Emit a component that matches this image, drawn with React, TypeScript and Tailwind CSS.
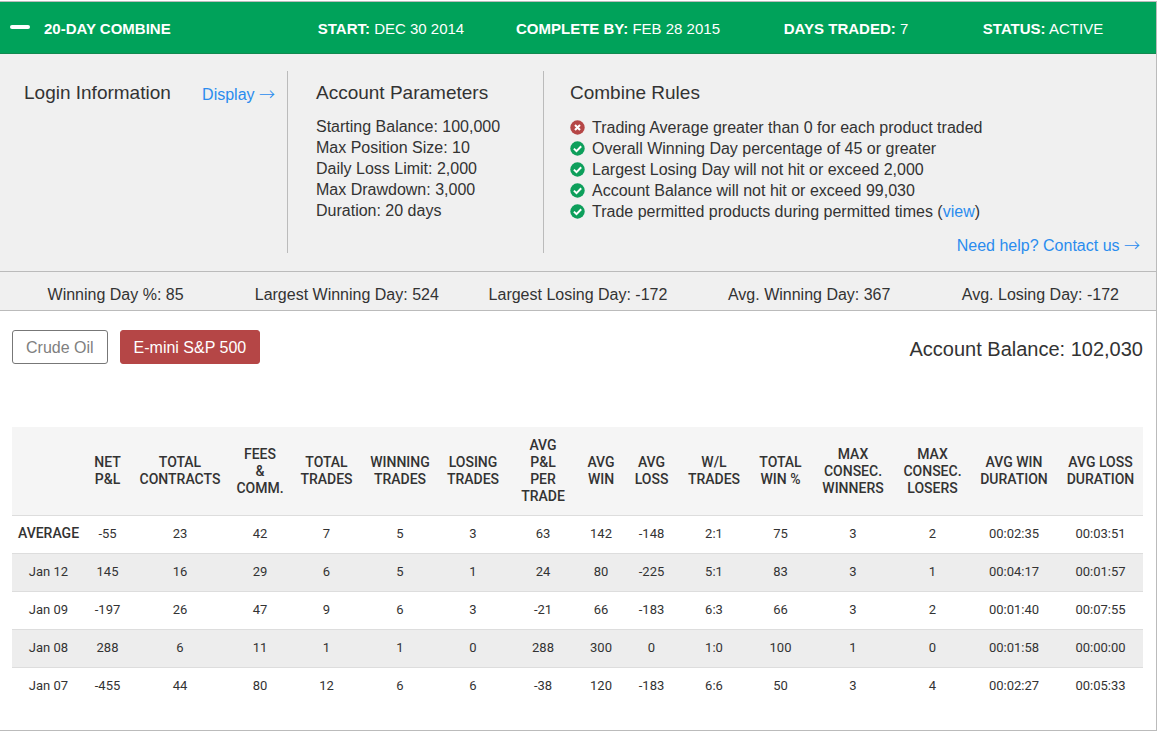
import type { ReactNode } from "react";

const summary = [
  { label: "START:", value: "DEC 30 2014" },
  { label: "COMPLETE BY:", value: "FEB 28 2015" },
  { label: "DAYS TRADED:", value: "7" },
  { label: "STATUS:", value: "ACTIVE" },
];

const parameters = [
  "Starting Balance: 100,000",
  "Max Position Size: 10",
  "Daily Loss Limit: 2,000",
  "Max Drawdown: 3,000",
  "Duration: 20 days",
];

const stats = [
  "Winning Day %: 85",
  "Largest Winning Day: 524",
  "Largest Losing Day: -172",
  "Avg. Winning Day: 367",
  "Avg. Losing Day: -172",
];

const columns = [
  { title: "", width: "w-[73px]" },
  { title: "NET\nP&L", width: "w-[45px]" },
  { title: "TOTAL\nCONTRACTS", width: "w-[100px]" },
  { title: "FEES\n&\nCOMM.", width: "w-[60px]" },
  { title: "TOTAL\nTRADES", width: "w-[73px]" },
  { title: "WINNING\nTRADES", width: "w-[74px]" },
  { title: "LOSING\nTRADES", width: "w-[72px]" },
  { title: "AVG\nP&L\nPER\nTRADE", width: "w-[68px]" },
  { title: "AVG\nWIN", width: "w-[48px]" },
  { title: "AVG\nLOSS", width: "w-[53px]" },
  { title: "W/L\nTRADES", width: "w-[72px]" },
  { title: "TOTAL\nWIN %", width: "w-[61px]" },
  { title: "MAX\nCONSEC.\nWINNERS", width: "w-[84px]" },
  { title: "MAX\nCONSEC.\nLOSERS", width: "w-[75px]" },
  { title: "AVG WIN\nDURATION", width: "w-[88px]" },
  { title: "AVG LOSS\nDURATION", width: "w-[85px]" },
];

const rows = [
  ["AVERAGE", "-55", "23", "42", "7", "5", "3", "63", "142", "-148", "2:1", "75", "3", "2", "00:02:35", "00:03:51"],
  ["Jan 12", "145", "16", "29", "6", "5", "1", "24", "80", "-225", "5:1", "83", "3", "1", "00:04:17", "00:01:57"],
  ["Jan 09", "-197", "26", "47", "9", "6", "3", "-21", "66", "-183", "6:3", "66", "3", "2", "00:01:40", "00:07:55"],
  ["Jan 08", "288", "6", "11", "1", "1", "0", "288", "300", "0", "1:0", "100", "1", "0", "00:01:58", "00:00:00"],
  ["Jan 07", "-455", "44", "80", "12", "6", "6", "-38", "120", "-183", "6:6", "50", "3", "4", "00:02:27", "00:05:33"],
];

const Arrow = () => (
  <span className="font-['Noto_Sans_CJK_JP',sans-serif] font-light leading-none">→</span>
);

const Rule = ({ passed, children }: { passed: boolean; children: ReactNode }) => (
  <li className="flex items-center gap-[7px]">
    <svg viewBox="0 0 15 15" className="size-[15px] shrink-0" fill="none">
      <circle cx="7.5" cy="7.5" r="7.2" fill={passed ? "#0d9f5b" : "#b54646"} />
      {passed ? (
        <path d="M3.9 7.6 6.5 10.1 11.2 5.3" stroke="#fff" strokeWidth="2" />
      ) : (
        <path d="M5 5 10 10M10 5 5 10" stroke="#fff" strokeWidth="2.1" />
      )}
    </svg>
    <span>{children}</span>
  </li>
);

const App = () => {
  return (
    <div className="pt-px font-['Liberation_Sans',Arial,sans-serif] text-base leading-[21px] text-[#333]">
      <div className="border-t border-r border-b border-[#bbb]">
        {/* Header */}
        <header className="grid grid-cols-[278fr_226fr_228fr_228fr_166fr_30fr] items-center h-[52px] pt-0.5 bg-[#00a25a] border-b border-[#128a50] text-[15px] text-white whitespace-nowrap">
          <div className="flex items-center gap-[14px] pl-[10px]">
            <button aria-label="Collapse" className="pt-1 pb-2">
              <span className="block w-5 h-1 rounded-full bg-white" />
            </button>
            <h1 className="font-bold">20-DAY COMBINE</h1>
          </div>
          {summary.map((item) => (
            <p key={item.label} className="text-center">
              <b>{item.label}</b> {item.value}
            </p>
          ))}
        </header>

        {/* Account details */}
        <section className="grid grid-cols-[287fr_256fr_613fr] pt-[17px] pb-[18px] bg-[#f0f0f0]">
          <div className="flex items-start justify-between pl-6 pr-3">
            <h2 className="pt-[11px] text-[19px]">Login Information</h2>
            <a href="#" className="pt-[13px] text-[#2a8cee]">
              Display <Arrow />
            </a>
          </div>
          <div className="border-l border-[#bbb] pl-7 pt-[11px]">
            <h2 className="text-[19px]">Account Parameters</h2>
            <ul className="pt-[13px]">
              {parameters.map((p) => (
                <li key={p}>{p}</li>
              ))}
            </ul>
          </div>
          <div className="flex flex-col border-l border-[#bbb] pl-[26px] pr-4 pt-[11px]">
            <h2 className="text-[19px]">Combine Rules</h2>
            <ul className="pt-[14px]">
              <Rule passed={false}>Trading Average greater than 0 for each product traded</Rule>
              <Rule passed>Overall Winning Day percentage of 45 or greater</Rule>
              <Rule passed>Largest Losing Day will not hit or exceed 2,000</Rule>
              <Rule passed>Account Balance will not hit or exceed 99,030</Rule>
              <Rule passed>
                Trade permitted products during permitted times (
                <a href="#" className="text-[#2a8cee]">view</a>)
              </Rule>
            </ul>
            <a href="#" className="self-end mt-[14px] leading-[14px] text-[#2a8cee]">
              Need help? Contact us <Arrow />
            </a>
          </div>
        </section>

        {/* Stats */}
        <section className="grid grid-cols-5 items-center h-10 pt-[6px] bg-[#f0f0f0] border-y border-[#bbb] text-center">
          {stats.map((s) => (
            <p key={s}>{s}</p>
          ))}
        </section>

        {/* Results */}
        <main className="pl-3 pr-[13px] pt-[19px] pb-6">
          <div className="flex items-center justify-between">
            <div className="flex gap-3">
              <button className="h-[34px] px-[13px] rounded-[3px] border border-[#777] bg-white text-[#808080]">
                Crude Oil
              </button>
              <button className="h-[34px] px-[13px] rounded-[3px] border border-[#b54646] bg-[#b54646] text-white">
                E-mini S&amp;P 500
              </button>
            </div>
            <p className="pt-1 text-xl">Account Balance: 102,030</p>
          </div>

          <table className="w-full table-fixed mt-[63px] border-separate border-spacing-0 font-[Roboto,sans-serif] text-[13px] leading-[17px] text-center">
            <thead>
              <tr className="bg-[#f5f5f5]">
                {columns.map((c, i) => (
                  <th
                    key={i}
                    scope="col"
                    className={`${c.width} py-[10px] text-sm leading-[17px] font-medium whitespace-pre border-b border-[#ddd]`}
                  >
                    {c.title}
                  </th>
                ))}
              </tr>
            </thead>
            <tbody>
              {rows.map((row) => (
                <tr key={row[0]} className="group even:bg-[#ededed]">
                  {row.map((cell, i) => (
                    <td
                      key={i}
                      className={`pt-[9px] pb-[11px] border-b border-[#ddd] group-last:border-transparent ${
                        cell === "AVERAGE" ? "text-sm leading-[17px] font-medium" : ""
                      }`}
                    >
                      {cell}
                    </td>
                  ))}
                </tr>
              ))}
            </tbody>
          </table>
        </main>
      </div>
    </div>
  );
};

export default App;
